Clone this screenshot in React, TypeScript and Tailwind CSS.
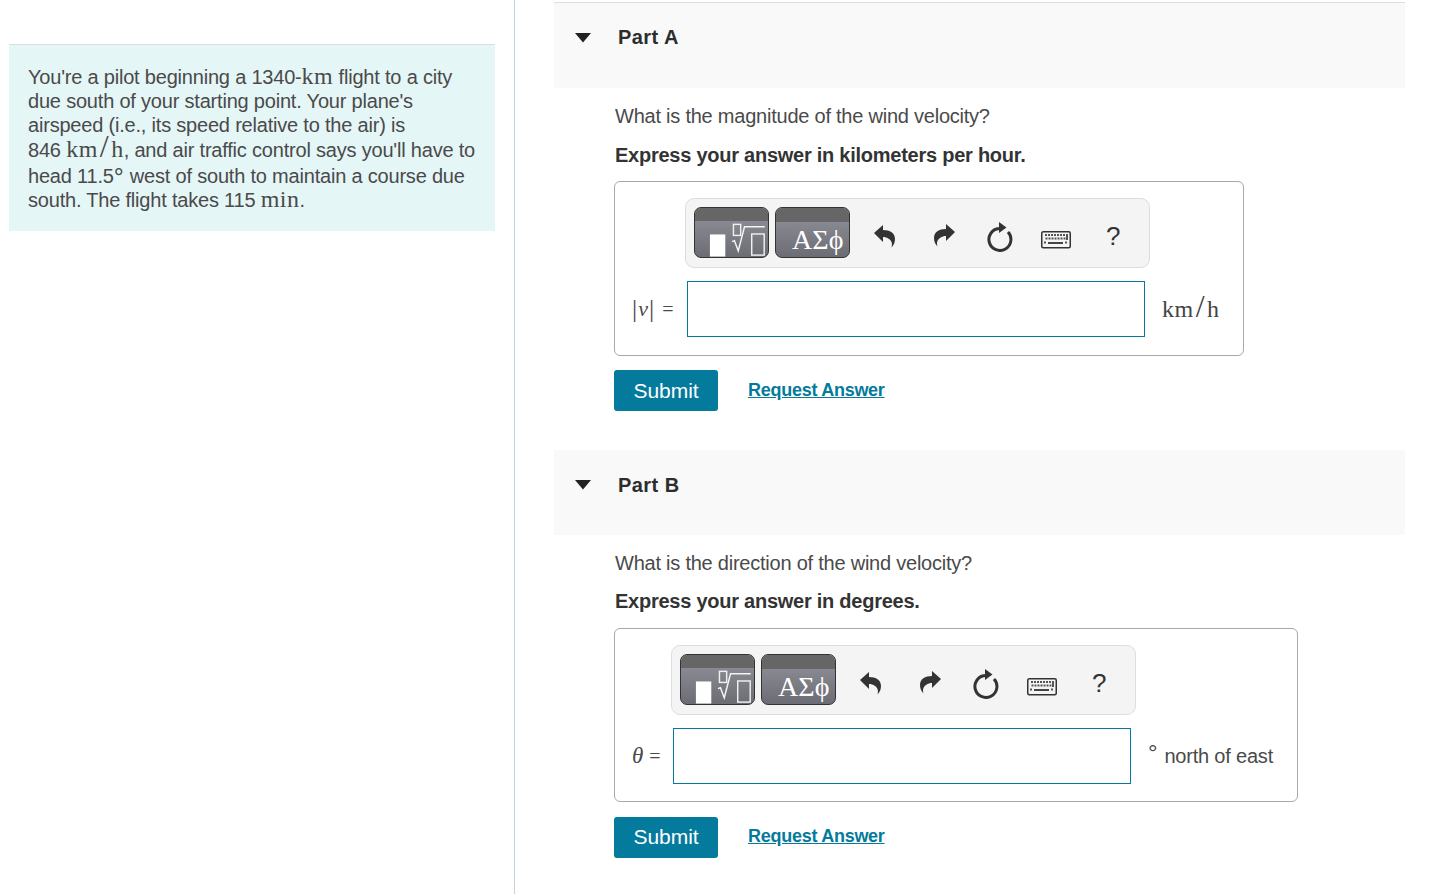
import React from "react";

const serif = "font-['Liberation_Serif',serif]";

function MathBtn() {
  return (
    <div className="relative w-[75px] h-[51px] rounded-[7px] border border-[#333] overflow-hidden bg-gradient-to-b from-[#94949e] to-[#6c6c74] flex flex-col">
      <div className="h-[14px] bg-[#666]" />
      <svg viewBox="0 0 75 37" className="w-[75px] h-[37px]">
        <rect x="14" y="14" width="16" height="23" fill="#fff" />
        <rect x="38.5" y="3.5" width="7.5" height="11.5" fill="none" stroke="#f0f0f0" strokeWidth="1.5" />
        <path d="M37 21.5 L39.5 20.5 L43.5 31 L50 6 H71" fill="none" stroke="#f4f4f4" strokeWidth="1.5" />
        <rect x="57.5" y="13.5" width="13" height="22" fill="none" stroke="#f0f0f0" strokeWidth="1.5" />
      </svg>
    </div>
  );
}

function SymbolBtn() {
  return (
    <div className="relative w-[75px] h-[51px] rounded-[7px] border border-[#333] overflow-hidden bg-gradient-to-b from-[#94949e] to-[#6c6c74]">
      <div className="h-[14px] bg-[#666]" />
      <div className={`${serif} text-white text-[28px] leading-[30px] pl-[16px] whitespace-nowrap tracking-[0.1px] mt-[3px]`}>ΑΣϕ</div>
    </div>
  );
}

function Undo({ flip = false, className = "" }: { flip?: boolean; className?: string }) {
  return (
    <svg viewBox="0 0 22 24" className={`w-[22px] h-[24px] shrink-0 ${flip ? "-scale-x-100" : ""} ${className}`}>
      <path
        fill="#333"
        d="M0 9 L9 1 V6 C16 6 21 9 21 15 C21 18 20 21 17.5 23.5 C18.5 20 18 17 15 15 C13 13.5 11 13 9 13 V18 Z"
      />
    </svg>
  );
}

function Reset({ className = "" }: { className?: string }) {
  return (
    <svg viewBox="0 0 26 30" className={`w-[26px] h-[30px] shrink-0 ${className}`}>
      <path d="M12 6.5 A11 11 0 1 0 21 10" fill="none" stroke="#333" strokeWidth="3" />
      <path d="M12 0 L19.5 5.5 L12 11 Z" fill="#333" />
    </svg>
  );
}

function Keyboard({ className = "" }: { className?: string }) {
  const top = [5, 8, 11, 14, 17, 20, 23];
  return (
    <svg viewBox="0 0 30 19" className={`w-[30px] h-[19px] shrink-0 ${className}`}>
      <rect x="0.75" y="1.75" width="28.5" height="16" rx="1.5" fill="#f4f4f4" stroke="#333" strokeWidth="1.5" />
      {top.map((x) => (
        <rect key={x} x={x - 1} y="4" width="2" height="2" fill="#555" />
      ))}
      {top.map((x) => (
        <rect key={x} x={x - 0.5} y="7.5" width="2" height="2" fill="#555" />
      ))}
      <rect x="25" y="4" width="2" height="6" fill="#555" />
      <rect x="3" y="11.5" width="2" height="2" fill="#555" />
      <rect x="7" y="12" width="15" height="2" fill="#444" />
      <rect x="24" y="11.5" width="2" height="2" fill="#555" />
    </svg>
  );
}

function Toolbar() {
  return (
    <div className="w-[465px] h-[70px] rounded-[9px] border border-[#ddd] bg-[#f4f4f4] flex items-center pl-[8px] pb-[1px]">
      <MathBtn />
      <div className="ml-[6px]"><SymbolBtn /></div>
      <Undo className="ml-[24px] mt-[6px]" />
      <Undo flip className="ml-[37px] mt-[4px]" />
      <Reset className="ml-[32px] mt-[8px]" />
      <Keyboard className="ml-[28px] mt-[14px]" />
      <span className="ml-[35px] text-[26px] leading-[30px] text-[#333] mt-[7px]">?</span>
    </div>
  );
}

function KmH() {
  return (
    <span className={`${serif} text-[24px] leading-[20px] whitespace-nowrap tracking-[0.5px]`}>
      km<span className="text-[32px] leading-[20px] font-light px-[2px]">/</span>h
    </span>
  );
}

function Part({
  title,
  question,
  express,
  boxClass,
  labelClass,
  label,
  unit,
  headerClass,
  arrowClass,
  expressMt,
  boxMt,
  submitMt,
  submitLeading,
  linkClass,
  section,
}: {
  title: string;
  question: string;
  express: string;
  boxClass: string;
  labelClass: string;
  label: React.ReactNode;
  unit: React.ReactNode;
  headerClass: string;
  arrowClass: string;
  expressMt: string;
  boxMt: string;
  submitMt: string;
  submitLeading: string;
  linkClass: string;
  section: string;
}) {
  return (
    <section className={section}>
      <div className={`bg-[#f9f9f9] flex items-start ${headerClass}`}>
        <svg viewBox="0 0 16 10" className={`w-[16px] h-[10px] ml-[21px] ${arrowClass}`}>
          <path d="M0 0 H16 L8 9.5 Z" fill="#222" />
        </svg>
        <h2 className="ml-[27px] text-[20px] leading-[24px] font-bold text-[#2d2d2d] tracking-[0.45px]">{title}</h2>
      </div>
      <div className="pl-[60px]">
        <p className="ml-[1px] mt-[15px] text-[20px] leading-[26px] text-[#4a4a4a] tracking-[-0.23px]">{question}</p>
        <p className={`ml-[1px] ${expressMt} text-[20px] leading-[26px] font-bold text-[#333] tracking-[-0.25px]`}>{express}</p>
        <div className={`${boxMt} ${boxClass} rounded-[6px] border border-[#a9a9a9] flex`}>
          <div className={`${labelClass} shrink-0 pl-[17px] text-[#4a4a4a]`}>{label}</div>
          <div className="pt-[16px] min-w-0">
            <Toolbar />
            <div className="flex items-start mt-[13px] ml-[2px]">
              <div className="w-[458px] h-[56px] border border-[#047a9c] bg-white shrink-0" />
              {unit}
            </div>
          </div>
        </div>
        <div className={`${submitMt} flex items-center`}>
          <button className={`w-[104px] h-[41px] rounded-[3px] bg-[#047a9c] text-white text-[21px] tracking-[-0.05px] ${submitLeading}`}>
            <span className="block">Submit</span>
          </button>
          <a className={`ml-[30px] text-[#047a9c] font-bold text-[18px] underline tracking-[-0.27px] ${linkClass}`}>Request Answer</a>
        </div>
      </div>
    </section>
  );
}

export default function App() {
  const m = `${serif} text-[24px] leading-[20px] tracking-[0.5px]`;
  return (
    <div className="w-[1450px] h-[894px] overflow-hidden bg-white flex font-['Liberation_Sans',Arial,sans-serif]">
      <aside className="w-[515px] h-full shrink-0 border-r border-[#c5d3dc] pt-[44px] pl-[9px] pr-[19px]">
        <div className="h-[187px] bg-[#e5f6f7] border-t border-[#d5e0e3] pt-[20px] pl-[19px] text-[20px] text-[#4a4a4a] tracking-[-0.2px] whitespace-nowrap">
          <div className="h-[24px] leading-[24px]">
            You're a pilot beginning a 1340-<span className={m}>km</span> flight to a city
          </div>
          <div className="h-[24px] leading-[24px]">due south of your starting point. Your plane's</div>
          <div className="h-[23px] leading-[24px]">airspeed (i.e., its speed relative to the air) is</div>
          <div className="h-[27px] leading-[20px]">
            846 <KmH />, and air traffic control says you'll have to
          </div>
          <div className="h-[25px] leading-[24px] pt-[1px]">
            head 11.5<span className="text-[25px] leading-[10px] align-[-3px] pr-[1px]">°</span> west of south to maintain a course due
          </div>
          <div className="h-[24px] leading-[24px]">
            south. The flight takes 115 <span className={m}>min</span>.
          </div>
        </div>
      </aside>
      <main className="ml-[39px] w-[851px] pt-[2px]">
        <Part
          title="Part A"
          question="What is the magnitude of the wind velocity?"
          express="Express your answer in kilometers per hour."
          boxClass="w-[630px] h-[175px]"
          labelClass="w-[70px] pt-[112px]"
          label={
            <span className={`${serif} whitespace-nowrap flex items-center h-[30px]`}>
              <span className="text-[26px] leading-[30px] font-light">|</span>
              <i className="text-[22px] leading-[30px] px-[1px]">v</i>
              <span className="text-[26px] leading-[30px] font-light">|</span>
              <span className="text-[20px] leading-[30px] ml-[8px]">=</span>
            </span>
          }
          unit={
            <span className="ml-[17px] mt-[15px] leading-[30px] text-[#444]">
              <KmH />
            </span>
          }
          headerClass="h-[86px] border-t border-[#e0e0e0] pt-[22px]"
          arrowClass="mt-[8px]"
          expressMt="mt-[13px]"
          boxMt="mt-[13px]"
          submitMt="mt-[14px]"
          submitLeading="leading-[41px] pb-0"
          linkClass=""
          section=""
        />
        <Part
          title="Part B"
          question="What is the direction of the wind velocity?"
          express="Express your answer in degrees."
          boxClass="w-[684px] h-[174px]"
          labelClass="w-[56px] pt-[112px]"
          label={
            <span className={`${serif} whitespace-nowrap flex items-center h-[30px]`}>
              <i className="text-[23px] leading-[30px]">θ</i>
              <span className="text-[20px] leading-[30px] ml-[6px]">=</span>
            </span>
          }
          unit={
            <span className="ml-[17px] mt-[13px] text-[20px] leading-[30px] text-[#4a4a4a] whitespace-nowrap tracking-[-0.2px]">
              <span className="text-[24px] leading-none align-[2px]">°</span>
              <span className="ml-[7px]">north of east</span>
            </span>
          }
          headerClass="h-[85px] pt-[23px]"
          arrowClass="mt-[7px]"
          expressMt="mt-[12px]"
          boxMt="mt-[14px]"
          submitMt="mt-[15px]"
          submitLeading="leading-[39px] pb-[2px]"
          linkClass="mb-[2px]"
          section="mt-[39px]"
        />
      </main>
    </div>
  );
}
